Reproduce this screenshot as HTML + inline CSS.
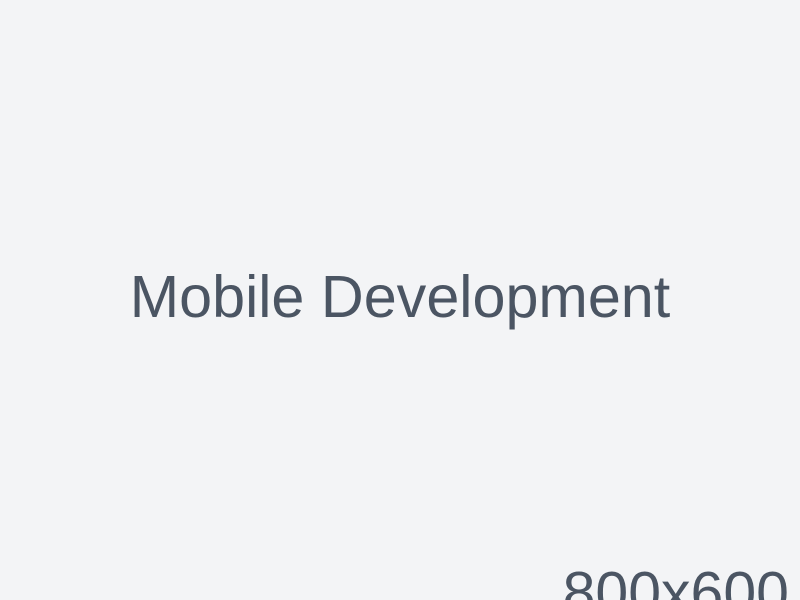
<!DOCTYPE html>
<html><head><meta charset="utf-8"><style>
html,body{margin:0;padding:0;width:800px;height:600px;overflow:hidden;}
body{background:#f3f4f6;position:relative;font-family:"Liberation Sans",sans-serif;color:#4b5563;}
.t{position:absolute;left:0;width:800px;text-align:center;top:262px;font-size:59.3px;line-height:70px;white-space:nowrap;}
.s{position:absolute;right:11px;top:558px;font-size:59px;line-height:70px;white-space:nowrap;}
</style></head><body>
<div class="t">Mobile Development</div>
<div class="s">800x600</div>
</body></html>
